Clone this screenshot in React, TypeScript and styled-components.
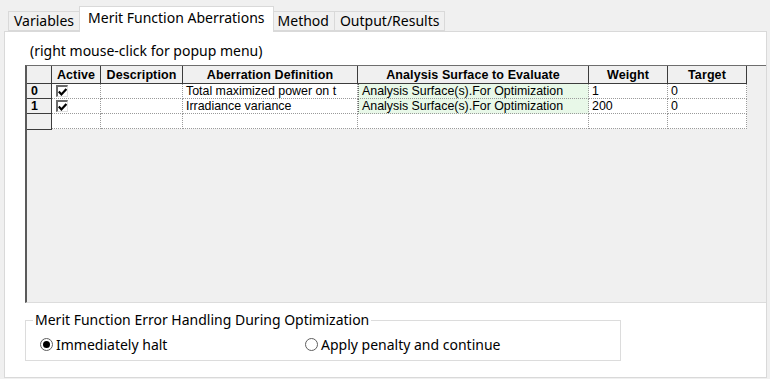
import { Fragment } from 'react'
import styled, { createGlobalStyle } from 'styled-components'

const GlobalStyle = createGlobalStyle`
  html, body {
    margin: 0;
    padding: 0;
    background: #f0f0f0;
  }
  body {
    width: 770px;
    height: 379px;
    overflow: hidden;
    font-family: "Noto Sans", "Liberation Sans", sans-serif;
  }
`

type CellKind = 'head' | 'rowhead' | 'data' | 'surface'

interface TabProps {
  readonly $active?: boolean;
}

interface CellProps {
  readonly $kind: CellKind;
}

const Window = styled.div`
  width: 770px;
  height: 379px;
  padding: 0 3px 0 4px;
  box-sizing: border-box;
`

const TabBar = styled.div`
  display: flex;
  align-items: flex-end;
  height: 31px;
  padding-left: 5px;
  position: relative;
  z-index: 1;
`

const Tab = styled.div<TabProps>`
  height: ${p => (p.$active ? '26px' : '20px')};
  margin: ${p => (p.$active ? '0 -1px -1px -1px' : '0 0 0 -1px')};
  padding: 0 ${p => (p.$active ? '8px' : '5px')};
  display: flex;
  align-items: center;
  box-sizing: border-box;
  background: ${p => (p.$active ? '#ffffff' : '#f0f0f0')};
  border: 1px solid #d9d9d9;
  border-bottom: ${p => (p.$active ? 'none' : '1px solid #d9d9d9')};
  font-size: 14px;
  color: #000;
  padding-bottom: ${p => (p.$active ? '4px' : '1px')};
  position: relative;
  z-index: ${p => (p.$active ? 2 : 1)};
`

const Panel = styled.div`
  height: 347px;
  box-sizing: border-box;
  background: #ffffff;
  border: 1px solid #d9d9d9;
  display: flex;
  flex-direction: column;
`

const Hint = styled.div`
  margin: 11px 0 6px 25px;
  font-size: 14px;
  line-height: 16px;
  color: #000;
`

const GridBox = styled.div`
  margin-left: 20px;
  height: 238px;
  box-sizing: border-box;
  background: #f0f0f0;
  border-top: 1px solid #6e6e6e;
  border-left: 2px solid #5a5a5a;
  border-bottom: 1px solid #dcdcdc;
`

const Table = styled.div`
  display: grid;
  grid-template-columns: 25px 49px 82px 175px 231px 79px 79px;
  grid-template-rows: 18px;
  grid-auto-rows: 15px;
  width: max-content;
  font-family: "Liberation Sans", Arial, sans-serif;
  color: #000;
`

const Cell = styled.div<CellProps>`
  box-sizing: border-box;
  display: flex;
  align-items: center;
  justify-content: ${p => (p.$kind === 'head' ? 'center' : 'flex-start')};
  padding-left: ${p => (p.$kind === 'head' ? '0' : p.$kind === 'rowhead' ? '4px' : '3px')};
  font-weight: ${p => (p.$kind === 'head' || p.$kind === 'rowhead' ? 700 : 400)};
  font-size: ${p => (p.$kind === 'head' ? '12.5px' : '12.4px')};
  letter-spacing: ${p => (p.$kind === 'head' ? '0.1px' : '0')};
  white-space: nowrap;
  overflow: hidden;
  background: ${p =>
    p.$kind === 'surface' ? '#e8f8e8' : p.$kind === 'data' ? '#ffffff' : '#f0f0f0'};
  border-right: ${p =>
    p.$kind === 'head' || p.$kind === 'rowhead' ? '1px solid #3c3c3c' : '1px dotted #9a9a9a'};
  border-bottom: ${p =>
    p.$kind === 'head' || p.$kind === 'rowhead' ? '1px solid #3c3c3c' : '1px dotted #9a9a9a'};
  border-left: ${p => (p.$kind === 'surface' ? '1px dotted #6a6a6a' : 'none')};
`

const CheckBox = styled.span`
  width: 12px;
  height: 12px;
  margin-left: 1px;
  box-sizing: border-box;
  background: #fff;
  border-top: 2px solid #6a6a6a;
  border-left: 2px solid #6a6a6a;
  border-right: 1px solid #e0e0e0;
  border-bottom: 1px solid #e0e0e0;
  display: flex;
  align-items: center;
  justify-content: center;
`

const GroupBox = styled.fieldset`
  margin: 8px 0 0 20px;
  width: 596px;
  box-sizing: border-box;
  border: 1px solid #dcdcdc;
  padding: 0 0 7px 7px;
  min-width: 0;
`

const GroupTitle = styled.legend`
  padding: 0 2px;
  font-size: 14px;
  line-height: 18px;
  color: #000;
`

const RadioRow = styled.div`
  display: flex;
  margin: 6px 0 0 7px;
  height: 18px;
  align-items: center;
`

const RadioOption = styled.label<{ $width: number }>`
  display: flex;
  align-items: center;
  width: ${p => p.$width}px;
  font-size: 14px;
  color: #000;
`

const RadioDot = styled.span<{ $checked?: boolean }>`
  width: 13px;
  height: 13px;
  box-sizing: border-box;
  border-radius: 50%;
  border: 1px solid #5e5e5e;
  background: #fff;
  margin-right: 3px;
  display: flex;
  align-items: center;
  justify-content: center;
  &::after {
    content: '';
    width: 7px;
    height: 7px;
    border-radius: 50%;
    background: ${p => (p.$checked ? '#000' : 'transparent')};
  }
`

const Check = () => (
  <CheckBox>
    <svg width="9" height="8" viewBox="0 0 9 8">
      <path d="M0.8 3.6 L3.4 6.4 L8.4 1" fill="none" stroke="#000" strokeWidth="2.2" />
    </svg>
  </CheckBox>
)

const headers = [
  '',
  'Active',
  'Description',
  'Aberration Definition',
  'Analysis Surface to Evaluate',
  'Weight',
  'Target',
]

const rows = [
  { id: '0', definition: 'Total maximized power on t', surface: 'Analysis Surface(s).For Optimization', weight: '1', target: '0' },
  { id: '1', definition: 'Irradiance variance', surface: 'Analysis Surface(s).For Optimization', weight: '200', target: '0' },
]

const App = () => {
  return (
    <Window>
      <GlobalStyle />
      <TabBar>
        <Tab>Variables</Tab>
        <Tab $active>Merit Function Aberrations</Tab>
        <Tab>Method</Tab>
        <Tab>Output/Results</Tab>
      </TabBar>
      <Panel>
        <Hint>(right mouse-click for popup menu)</Hint>
        <GridBox>
          <Table>
            {headers.map((h, i) => (
              <Cell key={`h${i}`} $kind="head">{h}</Cell>
            ))}
            {rows.map(r => (
              <Fragment key={r.id}>
                <Cell $kind="rowhead">{r.id}</Cell>
                <Cell $kind="data"><Check /></Cell>
                <Cell $kind="data" />
                <Cell $kind="data">{r.definition}</Cell>
                <Cell $kind="surface">{r.surface}</Cell>
                <Cell $kind="data">{r.weight}</Cell>
                <Cell $kind="data">{r.target}</Cell>
              </Fragment>
            ))}
            <Cell $kind="rowhead" style={{ height: 16 }} />
            {[0, 1, 2, 3, 4, 5].map(i => (
              <Cell key={`e${i}`} $kind="data" />
            ))}
          </Table>
        </GridBox>
        <GroupBox>
          <GroupTitle>Merit Function Error Handling During Optimization</GroupTitle>
          <RadioRow>
            <RadioOption $width={265}>
              <RadioDot $checked />
              Immediately halt
            </RadioOption>
            <RadioOption $width={250}>
              <RadioDot />
              Apply penalty and continue
            </RadioOption>
          </RadioRow>
        </GroupBox>
      </Panel>
    </Window>
  )
}

export default App
